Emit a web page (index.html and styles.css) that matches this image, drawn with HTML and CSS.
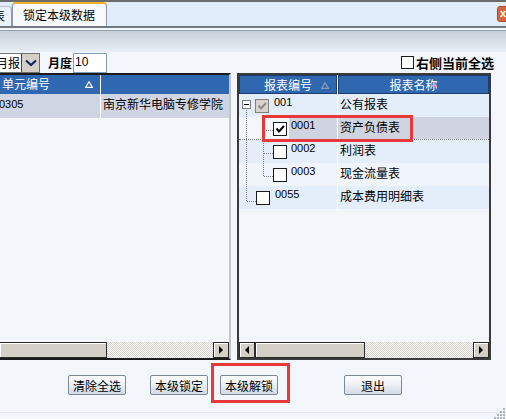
FILE: index.html
```html
<!DOCTYPE html>
<html lang="zh-CN">
<head>
    <meta charset="UTF-8">
    <title>锁定本级数据</title>
    <link rel="stylesheet" href="styles.css">
</head>
<body>
<div class="window">

    <!-- вкладки -->
    <div class="tabbar">
        <div class="tab-stub"><span>表</span></div>
        <div class="tab">锁定本级数据</div>
        <div class="close">x</div>
    </div>
    <div class="band"></div>

    <!-- панель параметрів -->
    <div class="toolbar">
        <div class="combo">
            <span class="combo-text">月报</span>
            <span class="combo-btn">
                <svg width="12" height="8" viewBox="0 0 12 8"><polyline points="1,1.5 6,6 11,1.5" fill="none" stroke="#14285a" stroke-width="2.2"/></svg>
            </span>
        </div>
        <span class="label-bold">月度</span>
        <input class="month-input" type="text" value="10">
        <label class="select-all"><span class="box"></span>右侧当前全选</label>
    </div>

    <div class="panels">
        <!-- ліва таблиця -->
        <div class="grid left-grid">
            <div class="grid-head left-cols">
                <div class="head-cell">单元编号
                    <svg class="sort" width="8" height="7" viewBox="0 0 8 7"><polygon points="4,0.8 7.3,6.3 0.7,6.3" fill="none" stroke="#fff" stroke-width="1.2"/></svg>
                </div>
                <div class="head-cell"></div>
            </div>
            <div class="grid-row left-cols selected">
                <div class="cell num cut">0305</div>
                <div class="cell">南京新华电脑专修学院</div>
            </div>
            <div class="filler"></div>
            <div class="hscroll">
                <div class="thumb thumb-left"></div>
                <div class="track"></div>
                <div class="arrow"><span class="tri-right"></span></div>
            </div>
        </div>

        <!-- права таблиця (дерево звітів) -->
        <div class="grid right-grid">
            <div class="grid-head right-cols">
                <div class="head-cell center">报表编号
                    <svg class="sort" width="8" height="7" viewBox="0 0 8 7"><polygon points="4,0.8 7.3,6.3 0.7,6.3" fill="none" stroke="#8c9cb4" stroke-width="1.2"/></svg>
                </div>
                <div class="head-cell center">报表名称</div>
            </div>

            <div class="grid-row right-cols row-blue">
                <div class="cell tree lv0">
                    <span class="expander"></span>
                    <span class="check disabled"><svg width="12" height="12" viewBox="0 0 12 12"><polyline points="2.5,5.5 5,8.5 10,3" fill="none" stroke="#8a8a8a" stroke-width="2"/></svg></span>
                    <span class="code">001</span>
                </div>
                <div class="cell">公有报表</div>
            </div>
            <div class="grid-row right-cols row-sel">
                <div class="cell tree lv1">
                    <span class="check"><svg width="12" height="12" viewBox="0 0 12 12"><polyline points="2.5,5.5 5,8.5 10,3" fill="none" stroke="#000" stroke-width="2"/></svg></span>
                    <span class="code">0001</span>
                </div>
                <div class="cell">资产负债表</div>
            </div>
            <div class="grid-row right-cols row-blue">
                <div class="cell tree lv1">
                    <span class="check"></span>
                    <span class="code">0002</span>
                </div>
                <div class="cell">利润表</div>
            </div>
            <div class="grid-row right-cols row-pale">
                <div class="cell tree lv1">
                    <span class="check"></span>
                    <span class="code">0003</span>
                </div>
                <div class="cell">现金流量表</div>
            </div>
            <div class="grid-row right-cols row-blue">
                <div class="cell tree lv0 leaf">
                    <span class="check"></span>
                    <span class="code">0055</span>
                </div>
                <div class="cell">成本费用明细表</div>
            </div>

            <svg class="tree-lines" width="40" height="115" viewBox="0 0 40 115">
                <g stroke="#7a7a7a" stroke-width="1" stroke-dasharray="1 1" fill="none">
                    <line x1="7.5" y1="14" x2="7.5" y2="108"/>
                    <line x1="8" y1="107.5" x2="17" y2="107.5"/>
                    <line x1="24.5" y1="23" x2="24.5" y2="83"/>
                    <line x1="25" y1="36.5" x2="34" y2="36.5"/>
                    <line x1="25" y1="59.5" x2="34" y2="59.5"/>
                    <line x1="25" y1="82.5" x2="34" y2="82.5"/>
                </g>
            </svg>

            <div class="filler"></div>
            <div class="hscroll">
                <div class="arrow"><span class="tri-left"></span></div>
                <div class="thumb thumb-right"></div>
                <div class="track"></div>
                <div class="arrow"><span class="tri-right"></span></div>
            </div>
        </div>
    </div>

    <!-- кнопки -->
    <div class="actions">
        <button class="btn">清除全选</button>
        <button class="btn gap-m">本级锁定</button>
        <button class="btn gap-s">本级解锁</button>
        <button class="btn gap-l">退出</button>
    </div>
    <div class="statusline"></div>

    <!-- червоні позначки -->
    <div class="mark mark-row"></div>
    <div class="mark mark-btn"></div>

    <svg class="grip" width="12" height="12" viewBox="0 0 12 12">
        <g fill="#a9b1bb">
            <rect x="9" y="1" width="2" height="2"/>
            <rect x="6" y="4" width="2" height="2"/><rect x="9" y="4" width="2" height="2"/>
            <rect x="3" y="7" width="2" height="2"/><rect x="6" y="7" width="2" height="2"/><rect x="9" y="7" width="2" height="2"/>
            <rect x="0" y="10" width="2" height="2"/><rect x="3" y="10" width="2" height="2"/><rect x="6" y="10" width="2" height="2"/><rect x="9" y="10" width="2" height="2"/>
        </g>
    </svg>
</div>
</body>
</html>
```

FILE: styles.css
```css
* {
    box-sizing: border-box;
}
html, body {
    margin: 0;
    padding: 0;
}
body {
    width: 506px;
    height: 419px;
    overflow: hidden;
    background-color: #f3f6fb;
    font-family: "Noto Sans CJK SC", "Liberation Sans", sans-serif;
    font-size: 12px;
    color: #000;
}
.window {
    position: relative;
    height: 419px;
    border-top: 2px solid #6c6c6c;
}

/* вкладки */
.tabbar {
    display: flex;
    align-items: flex-end;
    height: 26px;
    background-color: #e2edfb;
    border-bottom: 2px solid #707984;
}
.tab-stub {
    width: 12px;
    height: 20px;
    overflow: hidden;
    background-color: #eaf1fa;
    border-top: 1px solid #b3bfcc;
    border-right: 1px solid #8e9aa8;
    border-top-right-radius: 4px;
    line-height: 18px;
}
.tab-stub span {
    margin-left: -7px;
}
.tab {
    width: 95px;
    height: 24px;
    padding: 3px 0 0 10px;
    line-height: 16px;
    background-color: #f6f9fe;
    border: 1px solid #8e9aa8;
    border-top: 2px solid #f0b22a;
    border-bottom: none;
    border-radius: 4px 4px 0 0;
}
.close {
    align-self: flex-start;
    margin: 4px -5px 0 auto;
    width: 14px;
    height: 16px;
    background-color: #d8653d;
    border: 1px solid #a9482a;
    border-radius: 3px;
    color: #fff;
    font-family: "Liberation Sans", sans-serif;
    font-weight: bold;
    font-size: 11px;
    line-height: 13px;
    padding-left: 2px;
}
.band {
    margin-top: 2px;
    height: 22px;
    border-top: 1px solid #97a1ac;
    background: linear-gradient(#c6d0da, #e8eef5);
}

/* панель параметрів */
.toolbar {
    display: flex;
    align-items: center;
    height: 21px;
    padding-right: 12px;
}
.combo {
    display: flex;
    height: 20px;
    width: 45px;
    margin-left: -5px;
    background-color: #fff;
    border: 1px solid #6f6f6f;
}
.combo-text {
    width: 26px;
    font-size: 12px;
    line-height: 17px;
}
.combo-btn {
    width: 18px;
    display: flex;
    align-items: center;
    justify-content: center;
    background-color: #d4d0c8;
    border-left: 1px solid #404040;
}
.label-bold {
    margin-left: 8px;
    font-weight: bold;
}
.month-input {
    width: 34px;
    height: 20px;
    margin: 0 0 0 1px;
    padding: 0 0 2px 1px;
    border: 1px solid #7f9db9;
    font-family: "Liberation Sans", sans-serif;
    font-size: 12px;
    outline: none;
}
.select-all {
    margin-left: auto;
    display: flex;
    align-items: center;
    gap: 2px;
    font-weight: bold;
    font-size: 13px;
}
.select-all .box {
    width: 13px;
    height: 13px;
    background-color: #fff;
    border: 1px solid #1c1c1c;
}

/* таблиці */
.panels {
    display: flex;
    gap: 6px;
    height: 287px;
}
.grid {
    display: flex;
    flex-direction: column;
    overflow: hidden;
}
.left-grid {
    width: 231px;
    border-top: 2px solid #1b1b1b;
    border-bottom: 2px solid #1b1b1b;
    border-right: 2px solid #c5c5c5;
}
.right-grid {
    position: relative;
    width: 254px;
    border: 2px solid #3a3a3a;
}
.left-cols {
    grid-template-columns: 100px 128px;
}
.right-cols {
    grid-template-columns: 98px 151px;
}
.grid-head {
    display: grid;
    column-gap: 1px;
    height: 19px;
    background-color: #fff;
}
.head-cell {
    position: relative;
    background-color: #3067b1;
    color: #fff;
    line-height: 17px;
    padding-left: 2px;
}
.right-grid .head-cell {
    border: 1px solid #1e3c6c;
}
.head-cell.center {
    text-align: center;
    padding-left: 0;
}
.sort {
    position: absolute;
    right: 7px;
    top: 6px;
}
.grid-row {
    display: grid;
    column-gap: 1px;
    height: 23px;
    background-color: #fff;
}
.left-grid .grid-row {
    height: 24px;
}
.cell {
    padding: 2px 0 0 2px;
    line-height: 16px;
    white-space: nowrap;
    overflow: hidden;
}
.num {
    font-family: "Liberation Sans", sans-serif;
    font-size: 11px;
}
.cut {
    text-indent: -3px;
}
.selected .cell {
    background-color: #cfd5e2;
}
.row-blue .cell {
    background-color: #e4eefb;
}
.row-pale .cell {
    background-color: #f0f4fb;
}
.row-sel .cell {
    background-color: #cfd4e0;
}
.row-sel .tree {
    background: linear-gradient(to right, #f3f6fb 50px, #cfd4e0 50px);
}
.row-sel {
    border-bottom: 1px dotted #707070;
}

/* дерево */
.tree {
    display: flex;
    align-items: flex-start;
    padding: 0;
}
.tree.lv0 {
    padding-left: 3px;
}
.tree.lv0.leaf {
    padding-left: 17px;
}
.tree.lv1 {
    padding-left: 34px;
}
.expander {
    position: relative;
    width: 9px;
    height: 9px;
    margin-top: 6px;
    margin-right: 4px;
    background-color: #fff;
    border: 1px solid #7f7f7f;
}
.expander::after {
    content: "";
    position: absolute;
    left: 1px;
    top: 3px;
    width: 5px;
    height: 1px;
    background-color: #000;
}
.check {
    display: flex;
    align-items: center;
    justify-content: center;
    width: 14px;
    height: 14px;
    margin-top: 5px;
    background-color: #fff;
    border: 1px solid #1a1a1a;
}
.check.disabled {
    background-color: #d9d5ce;
    border-color: #808080;
}
.code {
    margin: 2px 0 0 5px;
    font-family: "Liberation Sans", sans-serif;
    font-size: 11px;
    line-height: 13px;
}
.lv1 .code {
    margin-left: 4px;
}
.tree-lines {
    position: absolute;
    left: 0;
    top: 19px;
}
.filler {
    flex: 1;
}

/* смуги прокрутки */
.hscroll {
    display: flex;
    height: 16px;
}
.thumb {
    background-color: #d4d0c8;
    border: 1px solid #2a2a2a;
    box-shadow: inset 1px 1px 0 #fff;
}
.thumb-left {
    width: 107px;
    border-left: none;
}
.thumb-right {
    width: 110px;
}
.track {
    flex: 1;
    background: repeating-conic-gradient(#d4d0c8 0 25%, #fff 0 50%) 0 0 / 2px 2px;
}
.arrow {
    width: 16px;
    display: flex;
    align-items: center;
    justify-content: center;
    background-color: #d4d0c8;
    border: 1px solid #2a2a2a;
    box-shadow: inset 1px 1px 0 #fff;
}
.tri-right {
    border-left: 4px solid #000;
    border-top: 4px solid transparent;
    border-bottom: 4px solid transparent;
}
.tri-left {
    border-right: 4px solid #000;
    border-top: 4px solid transparent;
    border-bottom: 4px solid transparent;
}

/* кнопки */
.actions {
    display: flex;
    align-items: flex-start;
    height: 52px;
    padding: 15px 0 0 68px;
}
.btn {
    width: 58px;
    height: 20px;
    padding: 0;
    border: 1px solid #7b8794;
    border-radius: 2px;
    background: linear-gradient(#fdfdfe, #eef1f5 45%, #d2dae3);
    font-family: "Noto Sans CJK SC", sans-serif;
    font-size: 12px;
    line-height: 17px;
    color: #000;
}
.gap-s {
    margin-left: 12px;
}
.gap-m {
    margin-left: 24px;
}
.gap-l {
    margin-left: 66px;
}
.statusline {
    border-top: 1px solid #e1e6ee;
    height: 7px;
}

/* позначки */
.mark {
    position: absolute;
    border: 3px solid #e8383a;
}
.mark-row {
    left: 262px;
    top: 113px;
    width: 151px;
    height: 27px;
}
.mark-btn {
    left: 211px;
    top: 361px;
    width: 79px;
    height: 40px;
}
.grip {
    position: absolute;
    right: 0;
    bottom: 0;
}
```
